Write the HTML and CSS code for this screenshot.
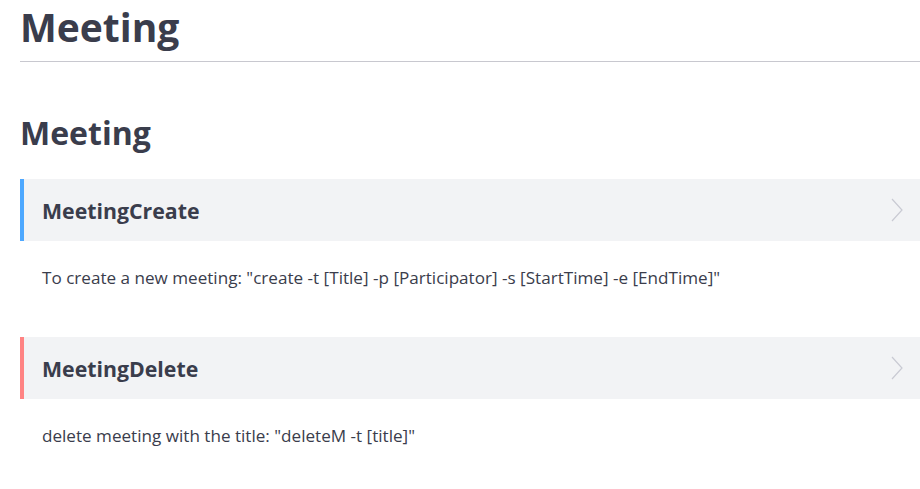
FILE: index.html
```html
<!DOCTYPE html>
<html>
<head>
<meta charset="utf-8">
<link rel="stylesheet" href="styles.css">
</head>
<body>
<div class="page">
  <h1 class="title">Meeting</h1>
  <h2 class="section">Meeting</h2>
  <div class="panel panel-blue">
    <span class="panel-title">MeetingCreate</span>
    <svg class="chev" width="14" height="24" viewBox="0 0 14 24"><path d="M2 1 L12 12 L2 23" fill="none" stroke="#c9cad3" stroke-width="1.2"/></svg>
  </div>
  <p class="desc">To create a new meeting: "create -t [Title] -p [Participator] -s [StartTime] -e [EndTime]"</p>
  <div class="panel panel-red">
    <span class="panel-title">MeetingDelete</span>
    <svg class="chev" width="14" height="24" viewBox="0 0 14 24"><path d="M2 1 L12 12 L2 23" fill="none" stroke="#c9cad3" stroke-width="1.2"/></svg>
  </div>
  <p class="desc">delete meeting with the title: "deleteM -t [title]"</p>
</div>
</body>
</html>
```
FILE: styles.css
```css
html, body {
  margin: 0;
  padding: 0;
  background: #fff;
}
body {
  font-family: "Open Sans", "Noto Sans", sans-serif;
  color: #3a3d4c;
}
.page {
  padding: 0 0 0 20px;
}
.title {
  margin: 0;
  font-size: 39px;
  font-weight: 700;
  line-height: 54px;
  padding-bottom: 7px;
  border-bottom: 1px solid #c8c8cf;
}
.section {
  margin: 51px 0 26px;
  font-size: 32px;
  font-weight: 700;
  line-height: 40px;
}
.panel {
  height: 62px;
  background: #f2f3f5;
  display: flex;
  align-items: center;
  justify-content: space-between;
  padding: 0 16px 0 18px;
}
.panel-blue { border-left: 4px solid #4ea8ff; }
.panel-red { border-left: 4px solid #ff8383; }
.panel-title {
  font-size: 21.3px;
  font-weight: 700;
}
.chev { display: block; }
.desc {
  margin: 22px 0 44px 22px;
  font-size: 17.1px;
  line-height: 30px;
}
```
